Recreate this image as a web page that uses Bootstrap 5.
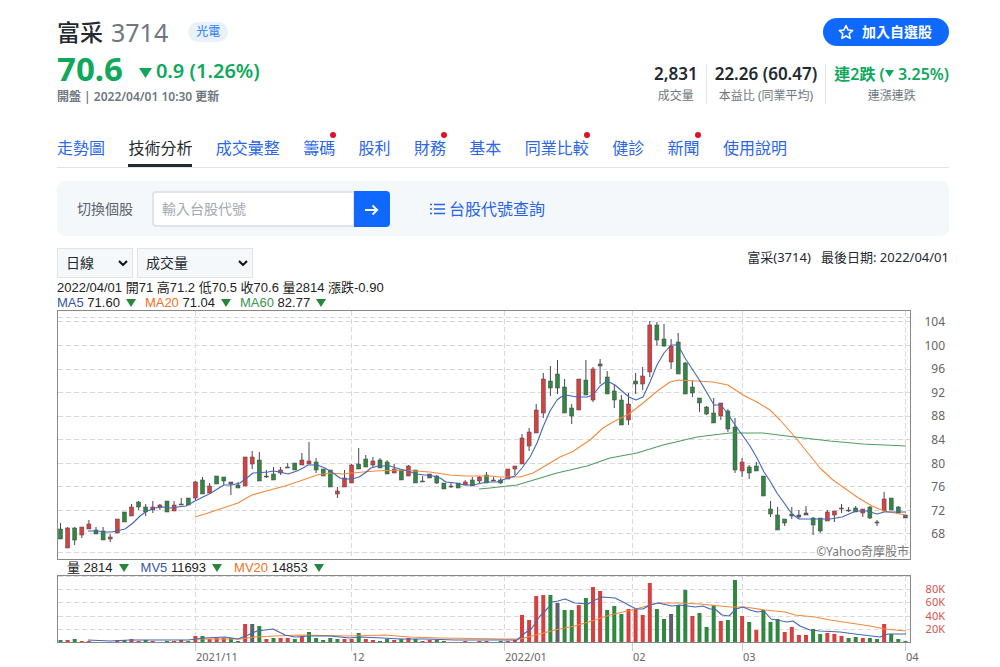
<!DOCTYPE html>
<html lang="zh-Hant">
<head>
<meta charset="utf-8">
<meta name="viewport" content="width=device-width, initial-scale=1">
<title>富采 3714 技術分析</title>
<link rel="stylesheet" href="https://cdn.jsdelivr.net/npm/bootstrap@5.3.0/dist/css/bootstrap.min.css">
<style>
  body { font-family: "Noto Sans", "Noto Sans CJK TC", sans-serif; color: #232a31; font-size: 14px; }
  .page { padding: 16px 51px 0 57px; }
  .stock-name { font-size: 23px; line-height: 32px; font-weight: 500; }
  .stock-code { font-size: 25px; line-height: 32px; color: #6e7780; }
  .sector { font-size: 12px; line-height: 20px; color: #2a7cf0; background: #e8f2fd; padding: 0 8px; margin-left: 20px; }
  .fall { color: #0fa85c; }
  .price { font-size: 33px; line-height: 42px; font-weight: 700; }
  .change { font-size: 20px; line-height: 24px; font-weight: 600; }
  .updated { font-size: 12px; line-height: 14px; font-weight: 600; color: #6e7780; }
  .btn-follow { background: #0f69ff; color: #fff; font-size: 14px; line-height: 20px; font-weight: 600; padding: 4px 16px 4px 14px; height: 28px; margin-top: 2px; }
  .btn-follow:hover { background: #0a55d4; color: #fff; }
  .stat { padding: 0 8px; border-left: 1px solid #e0e4e9; text-align: center; height: 40px; }
  .stat:first-child { border-left: 0; }
  .stat:last-child { padding-right: 0; }
  .stat dt { font-size: 12px; line-height: 16px; font-weight: 400; color: #6e7780; }
  .stat dd { font-size: 17px; line-height: 20px; font-weight: 600; margin: 0 0 4px; }
  .stat dd.fall { font-size: 16px; }
  .tabs { border-bottom: 1px solid #e0e4e9; margin-top: 24px; }
  .tab-row { max-width: 730px; }
  .tab-row a { font-size: 16px; line-height: 24px; padding: 8px 0 4px; border-bottom: 3px solid transparent; color: #2b66e8; text-decoration: none; white-space: nowrap; position: relative; }
  .tab-row a.active { color: #232a31; border-color: #232a31; }
  .tab-row a.fresh::after { content: ""; position: absolute; top: 4px; right: -1px; width: 6px; height: 6px; border-radius: 50%; background: #e0102c; }
  .switcher { background: #f5f8fa; border-radius: 8px; margin-top: 13px; padding: 9px 20px; height: 55px; }
  .switcher label { color: #5b636a; width: 75px; }
  .switcher .input-group { width: 238px; }
  .switcher .form-control { font-size: 14px; height: 36px; padding: 0 8px; border: 2px solid #e0e4e9; border-radius: 4px; }
  .switcher .form-control::placeholder { color: #a3a9b0; }
  .btn-go { background: #0f69ff; width: 36px; height: 36px; padding: 0; border: 0; border-radius: 4px; }
  .lookup { color: #2563eb; font-size: 16px; margin-left: 40px; text-decoration: none; }
  .pick { height: 30px; font: 14px/20px "Noto Sans", "Noto Sans CJK TC", sans-serif; color: #232a31; border: 1px solid #e0e4e9; border-radius: 0; padding: 0 8px; appearance: none;
    background: #f5f8fa url("data:image/svg+xml,%3Csvg xmlns='http://www.w3.org/2000/svg' viewBox='0 0 10 6'%3E%3Cpath d='M1 1l4 4 4-4' fill='none' stroke='%23111' stroke-width='2'/%3E%3C/svg%3E") no-repeat right 4px center / 10px 6px; }
  .pick-period { width: 76px; }
  .pick-index { width: 116px; }
  .last-date { font-size: 13px; line-height: 18px; }
  .readouts { padding-top: 2px; }
  .readout { font: 13px/15px "Liberation Sans", "Noto Sans CJK TC", sans-serif; color: #222; white-space: nowrap; }
  .readout span { margin-right: 9px; }
  .readout i { display: inline-block; margin-left: 6px; border: 5px solid transparent; border-top: 8px solid #25863c; border-bottom: 0; }
  .readout-volume { padding-left: 10px; }
  .readout-volume span { margin-right: 12px; }
  .blue { color: #3556a8; }
  .orange { color: #f0731e; }
  .green { color: #3d9450; }
  svg.plot { display: block; width: 100%; height: auto; font-family: "Noto Sans", "Noto Sans CJK TC", sans-serif; font-size: 12px; }
</style>
</head>
<body>
<main class="page">
  <header class="d-flex justify-content-between">
    <div>
      <div class="d-flex align-items-center">
        <h1 class="stock-name mb-0">富采</h1><span class="stock-code ms-2">3714</span>
        <span class="sector rounded-pill">光電</span>
      </div>
      <div class="d-flex align-items-center fall">
        <span class="price">70.6</span>
        <svg class="ms-3 me-1 mt-2" width="13" height="10" viewBox="0 0 13 10"><path d="M0 0h13L6.500 10z" fill="currentColor"/></svg>
        <span class="change mt-1">0.9 (1.26%)</span>
      </div>
      <div class="updated">開盤 | 2022/04/01 10:30 更新</div>
    </div>
    <div class="d-flex flex-column align-items-end justify-content-between">
      <button type="button" class="btn btn-follow rounded-pill d-flex align-items-center gap-2">
        <svg width="16" height="16" viewBox="0 0 16 16" fill="none" stroke="#fff" stroke-width="1.500" stroke-linejoin="round"><path d="M8 1.500l2 4.400 4.700.5-3.500 3.200 1 4.800L8 12l-4.200 2.400 1-4.800L1.300 6.400 6 5.900z"/></svg>
        加入自選股
      </button>
      <dl class="d-flex mb-0">
        <div class="stat d-flex flex-column-reverse"><dt>成交量</dt><dd>2,831</dd></div>
        <div class="stat d-flex flex-column-reverse"><dt>本益比 (同業平均)</dt><dd>22.26 (60.47)</dd></div>
        <div class="stat d-flex flex-column-reverse"><dt>連漲連跌</dt><dd class="fall">連2跌 (<svg width="9" height="7" viewBox="0 0 9 7" class="mb-1"><path d="M0 0h9L4.500 7z" fill="currentColor"/></svg> 3.25%)</dd></div>
      </dl>
    </div>
  </header>

  <nav class="tabs">
    <div class="tab-row d-flex justify-content-between">
      <a href="#">走勢圖</a><a href="#" class="active" aria-current="page">技術分析</a><a href="#">成交彙整</a><a href="#" class="fresh">籌碼</a><a href="#">股利</a><a href="#" class="fresh">財務</a><a href="#">基本</a><a href="#" class="fresh">同業比較</a><a href="#">健診</a><a href="#" class="fresh">新聞</a><a href="#">使用說明</a>
    </div>
  </nav>

  <form class="switcher d-flex align-items-center">
    <label for="code">切換個股</label>
    <div class="input-group">
      <input id="code" class="form-control" type="text" placeholder="輸入台股代號">
      <button type="button" class="btn btn-go" aria-label="查詢"><svg width="14" height="12" viewBox="0 0 14 12" fill="none" stroke="#fff" stroke-width="1.800"><path d="M0 6h12M7.500 1.500L12.200 6l-4.700 4.500"/></svg></button>
    </div>
    <a href="#" class="lookup d-flex align-items-center gap-1"><svg width="15" height="12" viewBox="0 0 15 12" stroke="currentColor" stroke-width="1.600"><path d="M0 1.500h2M4 1.500h11M0 6h2M4 6h11M0 10.500h2M4 10.500h11"/></svg>台股代號查詢</a>
  </form>

  <section>
    <div class="d-flex justify-content-between mt-2 pt-1">
      <div class="d-flex gap-1">
        <select class="pick pick-period" aria-label="週期"><option>日線</option></select>
        <select class="pick pick-index" aria-label="指標"><option>成交量</option></select>
      </div>
      <div class="last-date">富采(3714)&nbsp;&nbsp; 最後日期: 2022/04/01</div>
    </div>
    <div class="readouts">
      <div class="readout">2022/04/01 開71 高71.2 低70.5 收70.6 量2814 漲跌-0.90</div>
      <div class="readout"><span><b class="blue fw-normal">MA5</b> 71.60<i></i></span><span><b class="orange fw-normal">MA20</b> 71.04<i></i></span><span><b class="green fw-normal">MA60</b> 82.77<i></i></span></div>
    </div>
    <svg id="price" class="plot" viewBox="57 310 892 250"></svg>
    <div class="readout readout-volume"><span>量 2814<i></i></span><span><b class="blue fw-normal">MV5</b> 11693<i></i></span><span><b class="orange fw-normal">MV20</b> 14853<i></i></span></div>
    <svg id="volume" class="plot" viewBox="57 574 892 90"></svg>
  </section>
</main>

<script src="https://cdn.jsdelivr.net/npm/bootstrap@5.3.0/dist/js/bootstrap.bundle.min.js"></script>
<script>
// One trading day per entry: colour, body top, body bottom, wick top, wick bottom
const days = `g529,539,523,539 r528,548,527,548 g528,540,527,545 r527,535,527,538 r524,529,520,529 g530,534,527,534 g531,540,527,540 r537,539,534,542 r519,533,519,533 g512,522,512,522
r507,516,504,516 g502,507,501,510 g507,512,504,516 r507,510,501,513 r505,507,504,510 g501,512,501,512 r505,511,501,511 k504,505,498,505 g498,505,498,505 r482,498,481,500
g480,494,477,494 r486,493,483,493 g476,484,476,484 g477,481,477,485 k482,484,482,495 g485,488,482,488 r457,486,457,486 r457,464,451,469 g460,481,452,481 k476,477,470,478
g474,480,467,480 r470,473,467,475 k467,468,463,468 g463,470,463,470 r460,465,453,465 r461,464,442,464 g462,470,458,473 g469,476,469,476 g470,487,470,487 r491,494,487,498
r478,487,470,487 r465,483,464,483 g464,469,448,469 g459,467,455,467 r461,465,457,468 g460,468,458,468 g462,474,460,474 r469,473,464,473 g470,480,470,480 r466,476,465,476
g470,483,470,483 k481,482,476,482 k474,478,474,478 g476,483,475,484 g483,489,483,489 k486,487,482,488 g483,488,483,488 r482,485,480,485 g480,486,477,486 r477,481,476,483
g475,483,472,483 k480,481,477,481 g480,483,478,484 r469,479,469,479 r466,469,466,475 r438,464,434,464 r432,446,428,451 r410,433,404,433 r379,413,373,418 g381,388,366,396
g374,388,360,394 g387,413,379,413 g408,416,404,424 r379,410,379,410 g380,395,360,395 r369,400,367,402 k364,366,359,384 g377,394,371,394 g391,400,385,408 g400,425,395,425
r404,420,393,425 g381,384,373,394 r376,384,367,390 r325,372,321,377 g325,340,322,346 g339,346,324,347 r346,362,339,369 g342,374,333,374 g363,394,362,394 g387,393,381,397
g398,403,398,412 g407,414,406,415 g413,423,398,423 r403,416,403,420 g411,429,409,432 g427,470,418,473 r462,471,458,477 g467,473,465,479 g466,471,462,471 g476,496,476,496
g509,514,501,517 g515,530,507,530 g519,523,519,526 g514,516,507,519 k515,517,510,519 k513,515,506,515 g518,525,517,535 g518,531,518,533 r512,521,510,521 r511,515,511,522
k508,509,504,513 k510,511,507,512 g508,512,506,512 r509,513,509,517 g507,518,506,519 k522,523,520,526 r499,511,492,511 g498,510,498,510 g507,513,506,513 k515,518,515,518`.split(/\s+/);
const volumes = `g2 r2 g3 r1 r1 g0 g0 g0 r2 g2 r3 r1 g2 r1 g0 g1 r1 r2 g1 r6 g6 r3 r4 r4 g4 g1 r18 k18 g16 r3 g4 r4 r4 g3 r6 g10 g4 g2 g4 g3
r3 r3 g9 r3 r2 g1 g3 r2 g3 r4 g3 r1 r2 g2 g1 g0 g0 r1 g0 r1 r1 g0 g1 r1 r2 r27 r22 r46 r47 g47 k39 g32 g32 r37 g44 r55 r51 g32 g36 g28
r33 r33 r27 r59 g33 g23 k28 g37 g52 r26 g29 g15 g37 r21 g22 g62 r26 g20 r12 g32 g20 g23 r10 r15 r7 r7 g13 g8 r9 r8 r6 g4 g5 r4 g4 g3 r18 g8 g3 g1`.split(/\s+/);
const ma5 = "88,531 97,531 105,532 112,532 125,529 133,523 140,516 147,511 155,508 163,507 170,508 178,507 186,506 195,501 203,497 211,493 219,488 224,485 232,485 240,483 248,477 253,473 268,472 273,471 280,472 288,474 297,471 303,468 308,465 317,465 325,468 333,473 340,478 345,479 352,479 359,477 365,473 371,468 378,466 390,466 400,469 408,471 416,474 425,475 433,476 440,478 446,482 455,483 465,485 473,485 482,483 490,482 497,482 505,479 515,476 522,468 530,457 537,443 543,427 550,411 557,400 561,397 566,395 577,397 587,397 593,395 600,386 607,381 615,385 622,391 629,397 636,400 643,397 650,382 657,365 664,353 671,345 678,345 685,358 700,381 707,393 714,405 721,405 728,414 735,425 743,436 750,446 757,458 764,472 770,481 777,493 792,514 799,519 830,519 842,517 856,511 867,511 877,514 884,512 906,512";
const ma20 = "195,517 205,514 220,509 238,503 252,495 270,490 285,486 300,481 317,475 330,473 343,474 352,473 375,471 400,470 430,472 450,475 465,476 490,476 500,477 520,477 533,473 545,466 560,457 572,452 590,440 603,428 613,422 629,414 643,403 660,389 670,382 678,380 697,381 713,382 728,385 743,395 757,402 770,410 780,420 795,437 820,468 833,480 857,497 872,506 884,511 906,515";
const ma60 = "479,489 490,488 517,485 537,479 557,473 587,466 610,458 637,453 663,445 680,441 697,437 713,435 730,433 763,433 795,437 830,441 863,444 906,446";
const mv5 = "88,639 110,640 130,639 188,639 205,637 225,636 238,638 248,634 257,630 273,628 285,634 295,636 310,635 330,635 350,637 360,636 383,637 400,638 425,638 455,639 517,639 525,632 532,627 540,615 548,607 552,601 558,600 565,598 575,602 588,603 595,599 603,596 615,597 625,602 636,608 643,608 650,604 658,602 672,605 680,604 695,606 703,605 710,608 715,608 722,614 729,615 736,608 743,606 750,609 757,611 764,610 771,618 787,621 793,620 800,625 810,629 820,630 840,631 855,633 880,636 888,633 906,633";
const mv20 = "195,638 240,638 255,636 275,635 300,634 350,635 385,634 410,636 440,637 505,638 520,638 540,633 555,629 575,625 595,619 610,614 636,608 650,604 658,602 680,602 700,603 730,606 745,606 765,609 785,611 795,614 815,616 830,619 850,622 870,625 885,628 906,630";
const months = [[195.5, "2021/11"], [351.5, "12"], [504.5, "2022/01"], [632.5, "02"], [742.5, "03"], [905.5, "04"]];
const tone = { r: "#d6403f", g: "#2f8740", k: "#60606a" };
const x = i => 60.5 + 7.1 * i;
const line = (pts, c) => `<polyline points="${pts}" fill="none" stroke="${c}" stroke-width="1.1" stroke-linejoin="round"/>`;
const hLine = y => `<path d="M58 ${y}.5H910" stroke="#d9d9dc" stroke-dasharray="5 3"/>`;
const vLine = (px, a, b) => `<path d="M${px} ${a}V${b}" stroke="#d9d9dc" stroke-dasharray="5 3"/>`;

let p = [317, 321, 345, 369, 392, 416, 439, 463, 486, 510, 533, 552].map(hLine).join("");
p += months.map(m => vLine(m[0], 311, 559)).join("");
p += days.map((d, i) => {
  const [t, b, wt, wb] = d.slice(1).split(",").map(Number);
  return `<path d="M${x(i)} ${wt}V${wb}" stroke="#4c4450"/><rect x="${x(i) - 2}" y="${t}" width="4" height="${b - t}" fill="${tone[d[0]]}" stroke="#4c4450" stroke-width=".5"/>`;
}).join("");
p += line(ma20, "#f08a3c") + line(ma60, "#4f9d5f") + line(ma5, "#4566b4");
p += `<rect x="57.5" y="310.5" width="853" height="249" fill="none" stroke="#888"/>`;
p += [104, 100, 96, 92, 88, 84, 80, 76, 72, 68].map((v, i) => `<text x="945" y="${Math.round(326 + i * 23.6)}" text-anchor="end" fill="#666">${v}</text>`).join("");
p += `<text x="909" y="556" text-anchor="end" fill="#777" stroke="#fff" stroke-width="2" paint-order="stroke">©Yahoo奇摩股市</text>`;
document.getElementById("price").innerHTML = p;

let v = [575, 588, 601, 615, 628].map(hLine).join("");
v += months.map(m => vLine(m[0], 575, 641) + `<path d="M${m[0]} 642V650" stroke="#ccc"/><text x="${m[0] + 0.5}" y="660" font-size="11" fill="#666">${m[1]}</text>`).join("");
v += volumes.map((d, i) => `<rect x="${x(i) - 2}" y="${641 - d.slice(1)}" width="4" height="${d.slice(1)}" fill="${tone[d[0]]}"/>`).join("");
v += line(mv20, "#f08a3c") + line(mv5, "#4566b4");
v += `<rect x="57.5" y="574.5" width="853" height="67" fill="none" stroke="#888"/>`;
v += ["80K", "60K", "40K", "20K"].map((s, i) => `<text x="945" y="${Math.round(592 + i * 13.3)}" text-anchor="end" font-size="11" fill="#d9534f">${s}</text>`).join("");
document.getElementById("volume").innerHTML = v;
</script>
</body>
</html>
